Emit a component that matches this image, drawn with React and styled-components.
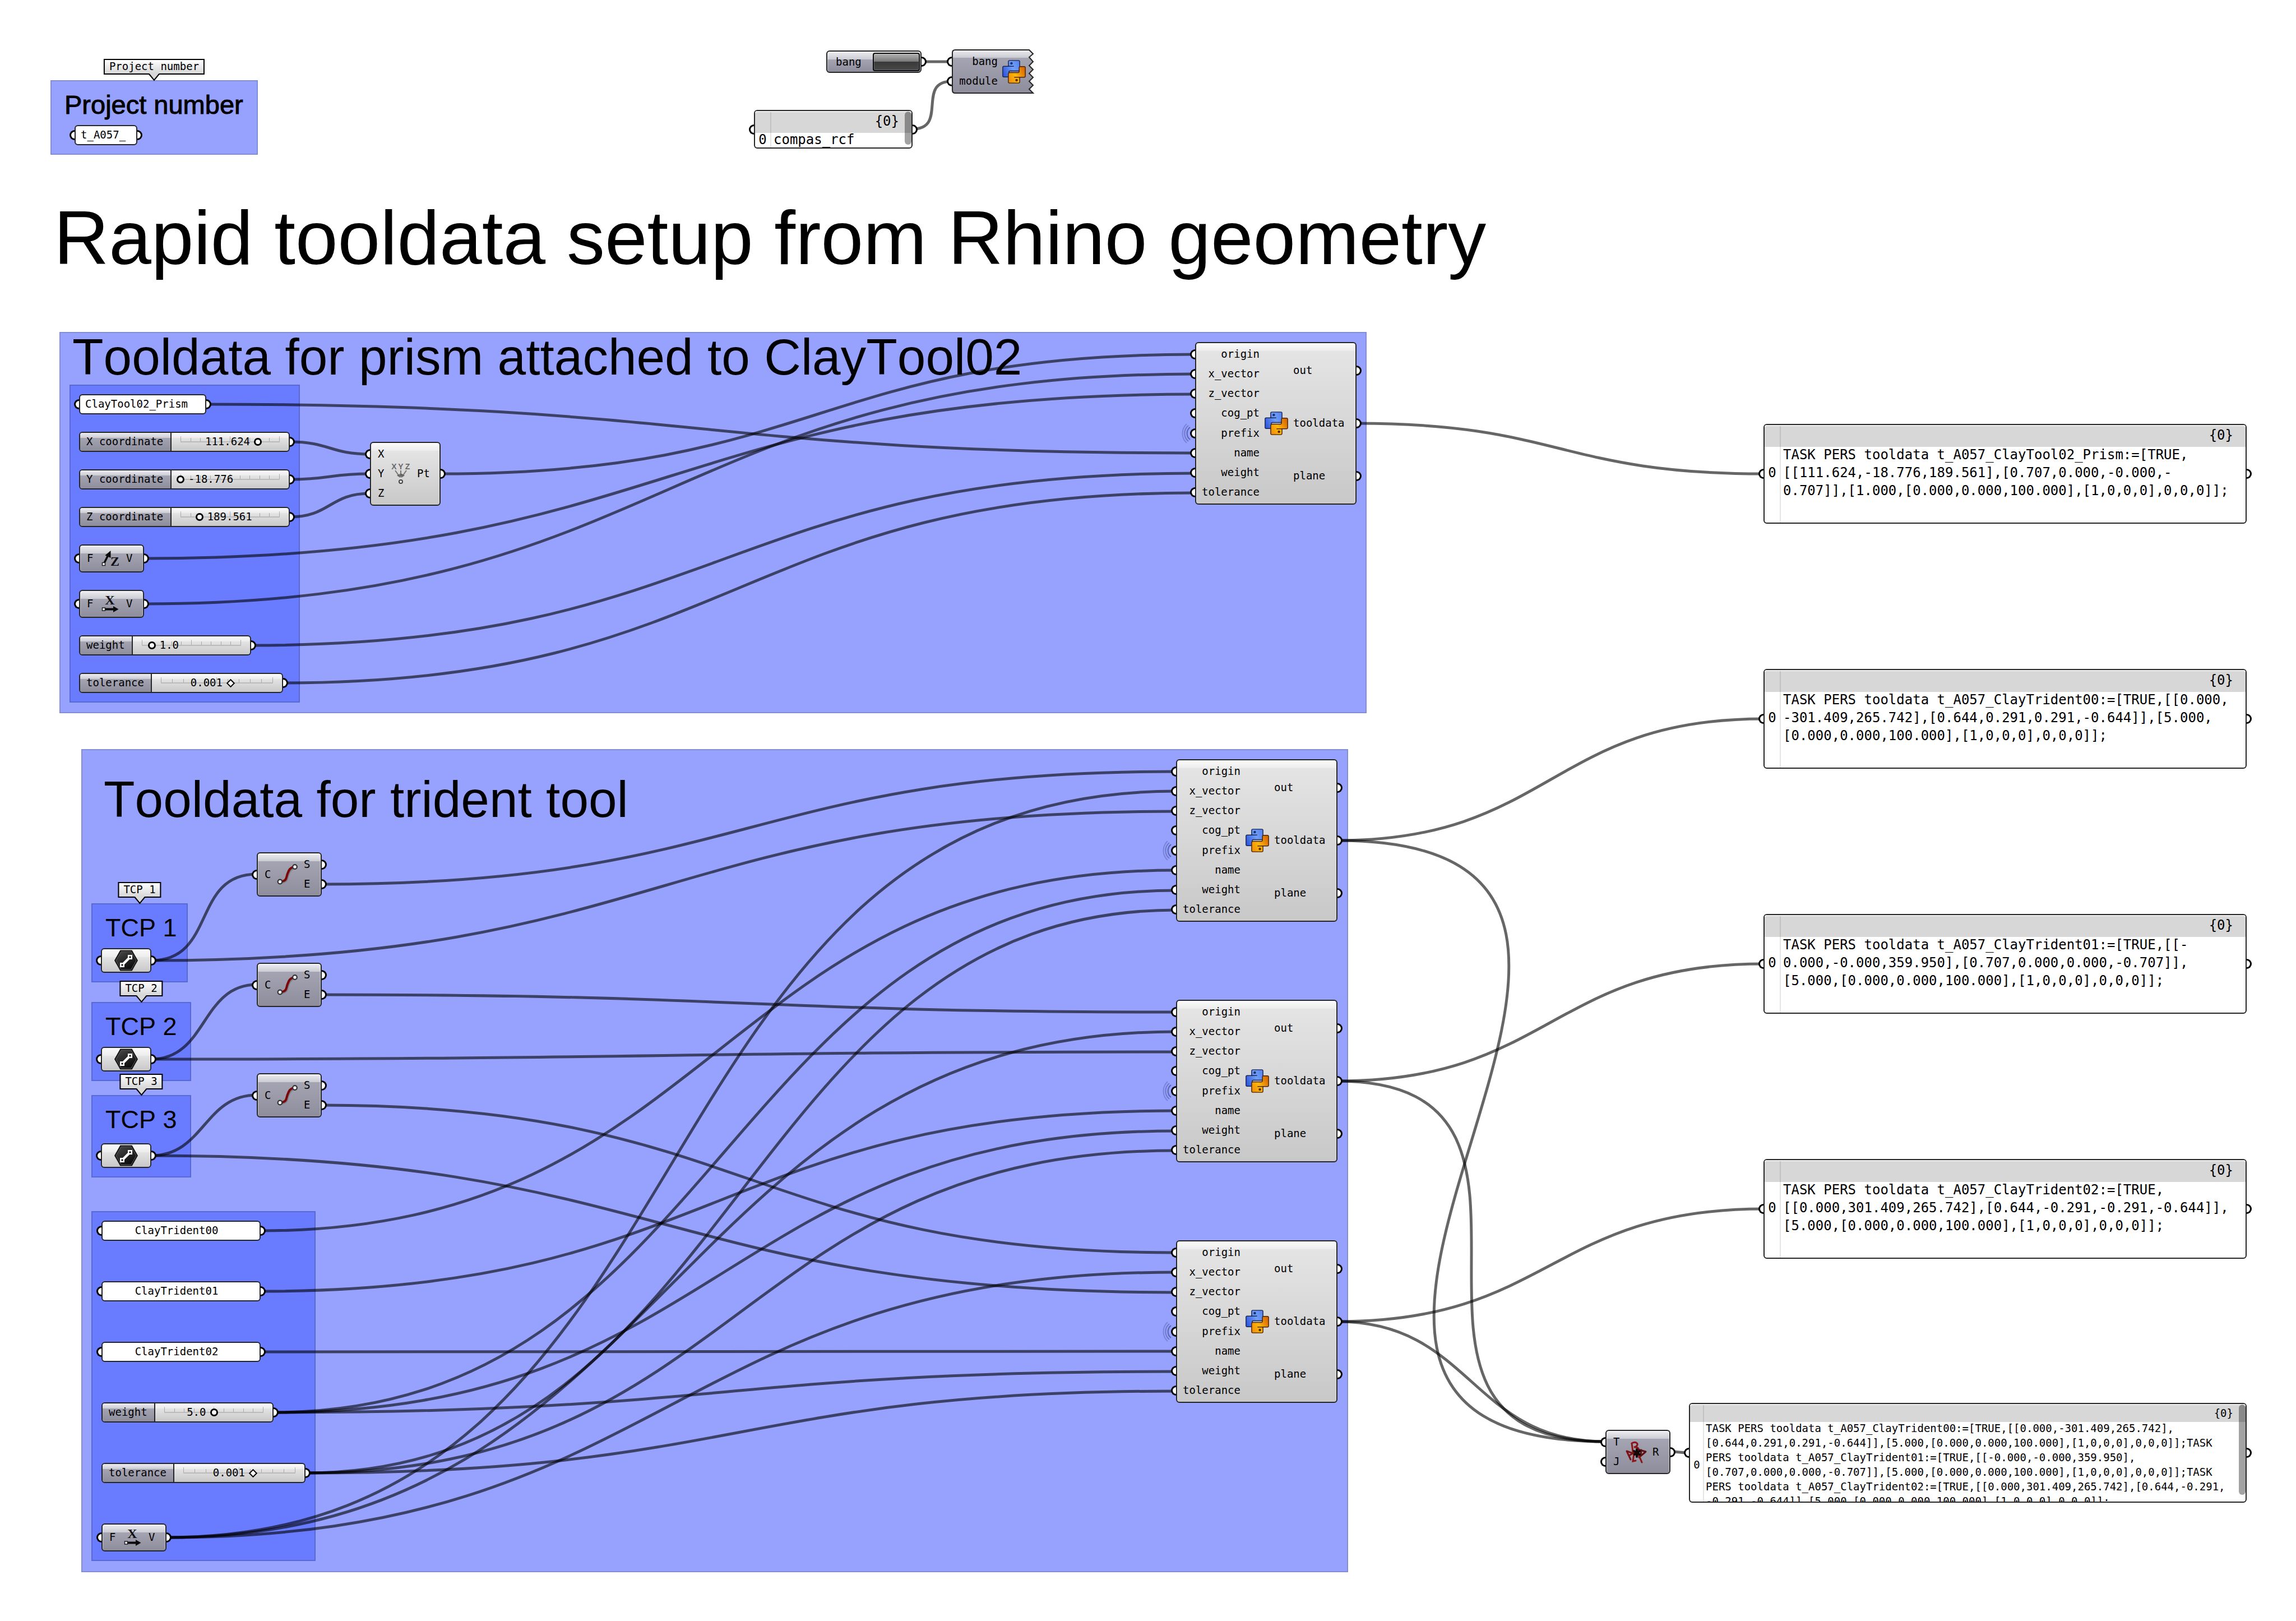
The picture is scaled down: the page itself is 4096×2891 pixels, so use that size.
import React from "react";
import styled, { createGlobalStyle, css } from "styled-components";

const MONO = '"DejaVu Sans Mono", "Liberation Mono", monospace';
const SANS = '"Liberation Sans", Arial, sans-serif';

const GlobalStyle = createGlobalStyle`
  *, *::before, *::after { box-sizing: border-box; }
  body { margin: 0; background: #fff; color: #000; font-family: ${MONO}; font-size: 19px; }
  h1, h2, h3, ul, pre { margin: 0; padding: 0; }
  ul { list-style: none; }
`;

/* ---------- canvas ---------- */

const Canvas = styled.main`
  position: relative;
  width: 100%;
  min-height: 100vh;
  overflow: hidden;
`;

/* A spot on the free canvas; what it holds is stacked in a column. */
const Place = styled.div`
  position: absolute;
  left: ${(p) => p.$x}px;
  top: ${(p) => p.$y}px;
  display: flex;
  flex-direction: column;
  gap: ${(p) => p.$gap || 0}px;
`;

const Group = styled.div`
  position: relative;
  display: flex;
  flex-direction: column;
  align-items: flex-start;
  gap: ${(p) => p.$gap || 0}px;
  padding: ${(p) => p.$pad || "19px 15px 15px"};
  width: ${(p) => p.$w}px;
  min-height: ${(p) => p.$h || 0}px;
  background: ${(p) => (p.$inner ? "#697cff" : "#97a2ff")};
  border: 2px solid ${(p) => (p.$inner ? "#5969d4" : "#838dd3")};
`;

/* Wires run over the groups and under every node and heading. */
const WireLayer = styled.svg`
  position: absolute;
  z-index: 1;
  inset: 0;
  width: 100%;
  height: 100%;
  fill: none;
  stroke: #000;
  stroke-opacity: 0.6;
  stroke-width: 5px;
  pointer-events: none;
`;

const onTop = css`
  position: relative;
  z-index: 2;
`;

const PageTitle = styled.h1`
  ${onTop}
  font: 400 136px / 1 ${SANS};
  font-kerning: none;
  white-space: nowrap;
`;

const GroupTitle = styled.h2`
  ${onTop}
  padding-left: 5px;
  font: 400 91px / 85px ${SANS};
  font-kerning: none;
  white-space: nowrap;
`;

const SmallTitle = styled.h3`
  ${onTop}
  padding-left: 8px;
  font: 400 ${(p) => (p.$heavy ? 47 : 45)}px / 45px ${SANS};
  font-kerning: none;
  white-space: nowrap;
  -webkit-text-stroke: ${(p) => (p.$heavy ? "1px #000" : "0")};
`;

/* ---------- node parts ---------- */

const darkFace = (band) =>
  `linear-gradient(#ececf1 0, #cbcbd3 ${band}px, #a5a4b3 ${band}px, #8e8d9b 100%)`;
const lightFace = (band) =>
  `linear-gradient(#fbfbfb 0, #ececec ${band}px, #e4e4e4 ${band}px, #c8c8c8 100%)`;

const Grip = styled.span`
  position: absolute;
  top: calc(50% - 9px);
  ${(p) => (p.$side === "left" ? "left" : "right")}: ${(p) => (p.$flush ? -9 : -11)}px;
  width: 9px;
  height: 18px;
  background: #fff;
  border: 3px solid #000;
  ${(p) =>
    p.$side === "left"
      ? "border-right: 0; border-radius: 9px 0 0 9px;"
      : "border-left: 0; border-radius: 0 9px 9px 0;"}
`;

const Body = styled.section`
  ${onTop}
  display: flex;
  width: ${(p) => p.$w}px;
  height: ${(p) => p.$h}px;
  border: 2px solid #262626;
  border-radius: 6px;
  background: ${(p) => (p.$dark ? darkFace(14) : lightFace(14))};
  box-shadow: inset 0 1px 0 1px rgba(255, 255, 255, 0.45);
`;

const TornBody = styled(Body)`
  border-color: transparent;
  background: none;
  box-shadow: none;
`;

const TornFace = styled.svg`
  position: absolute;
  z-index: -1;
  left: -2px;
  top: -2px;
  overflow: visible;
`;

const Ports = styled.ul`
  position: relative;
  display: flex;
  flex-direction: column;
  padding: 2px 0;
  width: ${(p) => (p.$w ? `${p.$w}px` : "auto")};
  flex: ${(p) => (p.$w ? "none" : "1")};
`;

const Port = styled.li`
  position: relative;
  flex: 1;
  display: flex;
  align-items: center;
  justify-content: ${(p) => (p.$end ? "flex-end" : "flex-start")};
  padding-left: ${(p) => p.$pad || 0}px;
  padding-bottom: 2px;
  line-height: 24px;
  white-space: nowrap;
`;

const IconSlot = styled.div`
  display: flex;
  align-items: center;
  margin-left: ${(p) => p.$gap || 0}px;
`;

const Waves = styled.svg`
  position: absolute;
  left: -28px;
  top: calc(50% - 26px);
  fill: none;
  stroke: #10184a;
  stroke-width: 2px;
`;

/* ---------- icons ---------- */

function PythonIcon({ id }) {
  const half =
    "M36 37V8q0-7 7-7h56q7 0 7 7v50q0 8-8 8H47q-8 0-8 8v22q0 7-7 7H8q-7 0-7-7V44q0-7 7-7z";
  return (
    <svg width="42" height="42" viewBox="-2 -2 146 146" aria-hidden="true">
      <defs>
        <linearGradient id={`${id}b`} x1="0" y1="0.7" x2="1" y2="0.3">
          <stop offset="0" stopColor="#3159dc" />
          <stop offset="0.6" stopColor="#6f9ff8" />
          <stop offset="1" stopColor="#5b86ee" />
        </linearGradient>
        <linearGradient id={`${id}o`} x1="0" y1="0.7" x2="1" y2="0.2">
          <stop offset="0" stopColor="#d96a06" />
          <stop offset="0.55" stopColor="#fdb80b" />
          <stop offset="1" stopColor="#ef8f0c" />
        </linearGradient>
      </defs>
      <path d={half} fill={`url(#${id}b)`} stroke="#182450" strokeWidth="5" />
      <path d="M34 37h36" stroke="#182450" strokeWidth="5" />
      <circle cx="55" cy="19" r="8" fill="#1a3170" />
      <g transform="rotate(180 71 71)">
        <path d={half} fill={`url(#${id}o)`} stroke="#4a2208" strokeWidth="5" />
        <path d="M34 37h36" stroke="#4a2208" strokeWidth="5" />
        <circle cx="55" cy="19" r="8" fill="#5c2c06" />
      </g>
    </svg>
  );
}

function CurveIcon() {
  return (
    <svg width="42" height="42" viewBox="0 0 42 42" fill="none" aria-hidden="true">
      <path d="M9 35C22 34 20 26 22 21.500S26 9.500 35 9" stroke="#55556a" strokeOpacity="0.4" strokeWidth="4" />
      <path d="M7.500 33.500C20 32.500 18.500 26 20.500 20.500S24 8 34 7" stroke="#7c0606" strokeWidth="4" />
      <circle cx="7.500" cy="33.500" r="3.800" fill="#fff" stroke="#333" strokeWidth="2.200" />
      <circle cx="34" cy="7" r="3.800" fill="#fff" stroke="#333" strokeWidth="2.200" />
    </svg>
  );
}

const Letter = styled.text`
  font-family: ${(p) => (p.$serif ? '"Liberation Serif", serif' : SANS)};
  font-weight: 700;
  font-size: ${(p) => (p.$serif ? 24 : 14)}px;
  fill: ${(p) => (p.$serif ? "#101014" : "#6a6a6a")};
  text-anchor: middle;
`;

function UnitZIcon() {
  return (
    <svg width="42" height="42" viewBox="0 0 42 42" aria-hidden="true">
      <path d="M10 31L18 15" stroke="#0a0a0a" strokeWidth="3.500" />
      <path d="M22.500 7L12.500 15.500L22.500 20z" fill="#0a0a0a" />
      <rect x="7.500" y="28.500" width="5" height="5" fill="#fff" stroke="#222" strokeWidth="1.500" />
      <Letter $serif x="30" y="34">Z</Letter>
    </svg>
  );
}

function UnitXIcon() {
  return (
    <svg width="42" height="42" viewBox="0 0 42 42" aria-hidden="true">
      <Letter $serif x="21" y="22">X</Letter>
      <path d="M12 30.500H28" stroke="#0a0a0a" strokeWidth="4" />
      <path d="M27 25L36.500 30.500L27 36z" fill="#0a0a0a" />
      <rect x="7.500" y="28" width="5" height="5" fill="#fff" stroke="#222" strokeWidth="1.500" />
    </svg>
  );
}

function XyzIcon() {
  return (
    <svg width="42" height="42" viewBox="0 0 42 42" fill="none" aria-hidden="true">
      <Letter x="9" y="13">X</Letter>
      <Letter x="21" y="13">Y</Letter>
      <Letter x="33" y="13">Z</Letter>
      <path d="M11 15L18 25M21 15V25M31 15L24 25" stroke="#777" strokeWidth="2" />
      <path d="M14 24l6 4-1-7zM18 21h6l-3 7zM28 24l-6 4 1-7z" fill="#666" />
      <circle cx="21" cy="35" r="3" fill="#fff" stroke="#444" strokeWidth="2" />
    </svg>
  );
}

function HexIcon({ id }) {
  return (
    <svg width="42" height="38" viewBox="0 0 42 38" aria-hidden="true">
      <defs>
        <linearGradient id={id} x1="0" y1="0" x2="0.6" y2="1">
          <stop offset="0" stopColor="#4a4a4a" />
          <stop offset="1" stopColor="#0c0c0c" />
        </linearGradient>
      </defs>
      <path d="M0 19L10.500 0.500H31.500L42 19L31.500 37.500H10.500z" fill="#151515" />
      <path d="M3 19L12 3H30L39 19L30 35H12z" fill={`url(#${id})`} stroke="#5a5a5a" strokeWidth="1" />
      <path d="M14 27L28 13" stroke="#fff" strokeWidth="4.500" />
      <rect x="10" y="23" width="8" height="8" fill="#fff" />
      <rect x="24" y="9" width="8" height="8" fill="#fff" />
      <rect x="12.500" y="25.500" width="3" height="3" fill="#111" />
      <rect x="26.500" y="11.500" width="3" height="3" fill="#111" />
    </svg>
  );
}

function ScriptIcon() {
  return (
    <svg width="42" height="42" viewBox="0 0 42 42" fill="none" strokeLinecap="round" aria-hidden="true">
      <path d="M15 20L13 5Q20 1 23 6Q24 10 17 12Q25 11 26 18" stroke="#8c1414" strokeWidth="3" />
      <path d="M4 19L11 34M4 19L18 24M8 27L17 22" stroke="#7a1216" strokeWidth="3" />
      <path d="M38 20L24 16M37 21L26 30M30 17L29 27" stroke="#5c1014" strokeWidth="3" />
      <path d="M17 24L15 37L20 36M25 26L28 32L31 39" stroke="#8c1414" strokeWidth="3" />
      <path d="M17 19L27 25M27 19L18 25M22 16V29" stroke="#160606" strokeWidth="4" />
    </svg>
  );
}

/* ---------- component nodes ---------- */

const PY_IN = ["origin", "x_vector", "z_vector", "cog_pt", "prefix", "name", "weight", "tolerance"];
const PY_OUT = ["out", "tooldata", "plane"];

function PythonNode({ id }) {
  return (
    <Body $w={288} $h={290}>
      <Ports $w={113}>
        {PY_IN.map((name) => (
          <Port key={name} $end>
            {name === "prefix" && (
              <Waves width="26" height="52" viewBox="0 0 26 52" aria-hidden="true">
                <path d="M17 15A14 14 0 0 0 17 37" strokeOpacity="0.45" />
                <path d="M14 12A18 18 0 0 0 14 40" strokeOpacity="0.3" />
                <path d="M11 9A23 23 0 0 0 11 43" strokeOpacity="0.22" />
              </Waves>
            )}
            <Grip $side="left" />
            {name}
          </Port>
        ))}
      </Ports>
      <IconSlot $gap={9}>
        <PythonIcon id={id} />
      </IconSlot>
      <Ports>
        {PY_OUT.map((name) => (
          <Port key={name} $pad={9}>
            {name}
            <Grip $side="right" />
          </Port>
        ))}
      </Ports>
    </Body>
  );
}

function SmallNode({ w = 116, h = 79, light, inputs, outputs, children }) {
  return (
    <Body $w={w} $h={h} $dark={!light}>
      <Ports $w={32}>
        {inputs.map((name) => (
          <Port key={name} $pad={12}>
            <Grip $side="left" />
            {name}
          </Port>
        ))}
      </Ports>
      <IconSlot>{children}</IconSlot>
      <Ports>
        {outputs.map((name) => (
          <Port key={name} $pad={8}>
            {name}
            <Grip $side="right" />
          </Port>
        ))}
      </Ports>
    </Body>
  );
}

const CenteredBody = styled(Body)`
  align-items: center;
  justify-content: center;
`;

function ParamNode({ id }) {
  return (
    <CenteredBody $w={90} $h={44}>
      <Grip $side="left" />
      <HexIcon id={id} />
      <Grip $side="right" />
    </CenteredBody>
  );
}

const TORN =
  "M138 1L145 8L138 14L145 22L138 29L145 36L138 43L145 50L138 57L145 64L138 71L145 78H6Q1 78 1 73V6Q1 1 6 1z";

function TornPythonNode() {
  return (
    <TornBody $w={146} $h={79}>
      <TornFace width="146" height="79" viewBox="0 0 146 79" aria-hidden="true">
        <defs>
          <linearGradient id="torn" x1="0" y1="0" x2="0" y2="1">
            <stop offset="0" stopColor="#ececf1" />
            <stop offset="0.18" stopColor="#cbcbd3" />
            <stop offset="0.18" stopColor="#a5a4b3" />
            <stop offset="1" stopColor="#8e8d9b" />
          </linearGradient>
        </defs>
        <path d={TORN} fill="url(#torn)" stroke="#262626" strokeWidth="2" />
      </TornFace>
      <Ports $w={80}>
        {["bang", "module"].map((name) => (
          <Port key={name} $end>
            <Grip $side="left" />
            {name}
          </Port>
        ))}
      </Ports>
      <IconSlot $gap={8}>
        <PythonIcon id="pyt" />
      </IconSlot>
    </TornBody>
  );
}

const BangBody = styled(Body)`
  align-items: center;
  justify-content: space-between;
  padding: 0 1px 0 15px;
  line-height: 24px;
`;

const BangButton = styled.button`
  width: 84px;
  height: 33px;
  padding: 0;
  border: 2px solid #0c0c0c;
  border-radius: 4px;
  background: linear-gradient(#b4b4b4 0, #747474 50%, #393939 50%, #484848 100%);
  box-shadow: inset 0 0 0 1px rgba(255, 255, 255, 0.2);
`;

/* ---------- text capsule ---------- */

const Capsule = styled.label`
  ${onTop}
  display: block;
  width: ${(p) => p.$w}px;
  height: 36px;
  margin-left: ${(p) => p.$indent || 0}px;
`;

const CapsuleInput = styled.textarea`
  display: block;
  width: 100%;
  height: 100%;
  margin: 0;
  padding: 1px ${(p) => (p.$center ? 16 : 0)}px 0 ${(p) => (p.$center ? 0 : 9)}px;
  border: 2px solid #262626;
  border-radius: 6px;
  background: #fff;
  color: #000;
  font: 19px / 28px ${MONO};
  text-align: ${(p) => (p.$center ? "center" : "left")};
  white-space: pre;
  resize: none;
  overflow: hidden;
`;

function TextCapsule({ w, value, center, indent }) {
  return (
    <Capsule $w={w} $indent={indent}>
      <Grip $side="left" $flush />
      <CapsuleInput rows={1} aria-label={value} defaultValue={value} $center={center} />
      <Grip $side="right" $flush />
    </Capsule>
  );
}

/* ---------- slider ---------- */

const SliderBody = styled(Body)`
  height: 36px;
  background: ${lightFace(9)};
`;

const SliderLabel = styled.label`
  width: ${(p) => p.$w}px;
  padding-left: 11px;
  border-right: 2px solid #262626;
  border-radius: 4px 0 0 4px;
  background: ${darkFace(9)};
  line-height: 30px;
  white-space: nowrap;
`;

const Track = styled.div`
  position: relative;
  flex: 1;
  margin: 0 16px;
`;

const Rail = styled.div`
  display: flex;
  justify-content: space-between;
  align-items: flex-end;
  height: 17px;
  border-bottom: 2px solid rgba(0, 0, 0, 0.15);
`;

const Tick = styled.span`
  width: 1px;
  height: ${(p) => (p.$major ? 9 : 6)}px;
  background: rgba(0, 0, 0, 0.25);
`;

const thumb = css`
  appearance: none;
  width: 14px;
  height: 14px;
  border: 3px solid #000;
  border-radius: 50%;
  background: #fff;
`;

const diamondThumb = css`
  width: 11px;
  height: 11px;
  border-width: 2px;
  border-radius: 0;
  transform: rotate(45deg);
`;

const Range = styled.input`
  position: absolute;
  left: -7px;
  top: 8px;
  width: calc(100% + 14px);
  height: 16px;
  margin: 0;
  appearance: none;
  background: none;
  &::-webkit-slider-thumb { ${thumb} ${(p) => p.$diamond && diamondThumb} }
  &::-moz-range-thumb { ${thumb} ${(p) => p.$diamond && diamondThumb} }
`;

const Value = styled.output`
  position: absolute;
  top: 3px;
  line-height: 24px;
`;

function Slider({ id, w, label, labelW, value, pos, before, diamond }) {
  return (
    <SliderBody $w={w}>
      <SliderLabel htmlFor={id} $w={labelW}>{label}</SliderLabel>
      <Track>
        <Rail>
          {Array.from({ length: 11 }, (_, i) => (
            <Tick key={i} $major={i % 5 === 0} />
          ))}
        </Rail>
        <Value
          htmlFor={id}
          style={before ? { right: `calc(${100 - pos}% + 14px)` } : { left: `calc(${pos}% + 14px)` }}
        >
          {value}
        </Value>
        <Range id={id} type="range" min="0" max="100" step="any" defaultValue={pos} $diamond={diamond} />
      </Track>
      <Grip $side="right" />
    </SliderBody>
  );
}

/* ---------- panel ---------- */

const PanelBody = styled(Body)`
  flex-direction: column;
  background: #fff;
  font-size: ${(p) => (p.$small ? 19 : 24)}px;
`;

const PanelHead = styled.header`
  height: ${(p) => (p.$small ? 32 : 39)}px;
  flex: none;
  padding-right: 22px;
  border-radius: 4px 4px 0 0;
  background: #d7d7d7;
  box-shadow: inset 0 2px 0 #f0f0f0;
  line-height: ${(p) => (p.$small ? 32 : 37)}px;
  text-align: right;
`;

const PanelMain = styled.div`
  flex: 1;
  min-height: 0;
  margin-top: -2px;
  overflow: hidden;
`;

const PanelRow = styled.div`
  display: flex;
  align-items: center;
  line-height: ${(p) => p.$line}px;
`;

const Index = styled.span`
  width: ${(p) => (p.$small ? 24 : 27)}px;
  text-align: center;
`;

const PanelText = styled.pre`
  padding-left: ${(p) => (p.$small ? 4 : 6)}px;
  font: inherit;
  font-family: ${MONO};
`;

const Divider = styled.span`
  position: absolute;
  left: ${(p) => (p.$small ? 23 : 27)}px;
  top: 2px;
  bottom: 0;
  width: 2px;
  background: rgba(0, 0, 0, 0.1);
`;

const ScrollThumb = styled.span`
  position: absolute;
  right: 0;
  top: 1px;
  bottom: ${(p) => p.$bottom}px;
  width: 12px;
  border-radius: 6px;
  background: rgba(0, 0, 0, 0.36);
`;

function Panel({ w = 862, h = 178, line = 32, lines, small, thumbBottom }) {
  return (
    <PanelBody $w={w} $h={h} $small={small}>
      <PanelHead $small={small}>{"{0}"}</PanelHead>
      <PanelMain>
        <PanelRow $line={line}>
          <Index $small={small}>0</Index>
          <PanelText $small={small}>{lines.join("\n")}</PanelText>
        </PanelRow>
      </PanelMain>
      <Divider $small={small} />
      {thumbBottom && <ScrollThumb $bottom={thumbBottom} />}
      <Grip $side="left" />
      <Grip $side="right" />
    </PanelBody>
  );
}

/* ---------- tags ---------- */

/* Balloon that hangs over the middle of a group's top edge. */
const TagBox = styled.div`
  position: absolute;
  z-index: 3;
  bottom: calc(100% + 12px);
  left: 50%;
  transform: translateX(-50%);
  height: 28px;
  padding: 0 8px;
  border: 2px solid #000;
  background: linear-gradient(#fff, #d6d6d6);
  line-height: 23px;
  white-space: pre;
`;

const TagTip = styled.svg`
  position: absolute;
  left: calc(50% - 10px);
  top: 24px;
`;

function Tag({ children }) {
  return (
    <TagBox>
      {children}
      <TagTip width="20" height="14" viewBox="0 0 20 14" aria-hidden="true">
        <path d="M1 0L10 12L19 0z" fill="#d8d8d8" />
        <path d="M1 1L10 12L19 1" fill="none" stroke="#000" strokeWidth="2" />
      </TagTip>
    </TagBox>
  );
}

/* ---------- data ---------- */

const PY = [
  { x: 2132, y: 610 },
  { x: 2098, y: 1354 },
  { x: 2098, y: 1783 },
  { x: 2098, y: 2212 },
];
const PANEL_Y = [756, 1193, 1630, 2067];
const CURVE_Y = [1520, 1717, 1914];

const TCPS = [
  { name: "TCP 1", y: 1611, w: 172, gap: 14, nodeY: 1691 },
  { name: "TCP 2", y: 1787, w: 178, gap: 14, nodeY: 1867 },
  { name: "TCP 3", y: 1953, w: 178, gap: 20, nodeY: 2039 },
];

const PANELS = [
  [
    "TASK PERS tooldata t_A057_ClayTool02_Prism:=[TRUE,",
    "[[111.624,-18.776,189.561],[0.707,0.000,-0.000,-",
    "0.707]],[1.000,[0.000,0.000,100.000],[1,0,0,0],0,0,0]];",
  ],
  [
    "TASK PERS tooldata t_A057_ClayTrident00:=[TRUE,[[0.000,",
    "-301.409,265.742],[0.644,0.291,0.291,-0.644]],[5.000,",
    "[0.000,0.000,100.000],[1,0,0,0],0,0,0]];",
  ],
  [
    "TASK PERS tooldata t_A057_ClayTrident01:=[TRUE,[[-",
    "0.000,-0.000,359.950],[0.707,0.000,0.000,-0.707]],",
    "[5.000,[0.000,0.000,100.000],[1,0,0,0],0,0,0]];",
  ],
  [
    "TASK PERS tooldata t_A057_ClayTrident02:=[TRUE,",
    "[[0.000,301.409,265.742],[0.644,-0.291,-0.291,-0.644]],",
    "[5.000,[0.000,0.000,100.000],[1,0,0,0],0,0,0]];",
  ],
];

const JOINED = [
  "TASK PERS tooldata t_A057_ClayTrident00:=[TRUE,[[0.000,-301.409,265.742],",
  "[0.644,0.291,0.291,-0.644]],[5.000,[0.000,0.000,100.000],[1,0,0,0],0,0,0]];TASK",
  "PERS tooldata t_A057_ClayTrident01:=[TRUE,[[-0.000,-0.000,359.950],",
  "[0.707,0.000,0.000,-0.707]],[5.000,[0.000,0.000,100.000],[1,0,0,0],0,0,0]];TASK",
  "PERS tooldata t_A057_ClayTrident02:=[TRUE,[[0.000,301.409,265.742],[0.644,-0.291,",
  "-0.291,-0.644]],[5.000,[0.000,0.000,100.000],[1,0,0,0],0,0,0]];",
];

/* ---------- wiring ---------- */

const pyIn = (n, i) => [PY[n].x, Math.round(PY[n].y + 22 + i * 35.25)];
const pyOut = (n) => [PY[n].x + 288, PY[n].y + 145];

const WIRES = [
  [[1644, 110], [1698, 110]],
  [[1628, 230], [1698, 145]],
  [[517, 788], [660, 810]],
  [[517, 855], [660, 845]],
  [[517, 922], [660, 880]],
  [[786, 845], pyIn(0, 0)],
  [[257, 1077], pyIn(0, 1)],
  [[257, 996], pyIn(0, 2)],
  [[368, 721], pyIn(0, 5)],
  [[448, 1151], pyIn(0, 6)],
  [[505, 1218], pyIn(0, 7)],
  [pyOut(0), [3146, 845]],
  ...[1, 2, 3].flatMap((n) => {
    const c = CURVE_Y[n - 1];
    const tcp = [270, TCPS[n - 1].nodeY + 22];
    return [
      [tcp, [458, c + 39]],
      [tcp, pyIn(n, 2)],
      [[574, c + 57], pyIn(n, 0)],
      [[465, 2087 + 108 * n], pyIn(n, 5)],
      [[488, 2519], pyIn(n, 6)],
      [[545, 2627], pyIn(n, 7)],
      [[297, 2742], pyIn(n, 1)],
      [pyOut(n), [3146, PANEL_Y[n] + 89]],
      [pyOut(n), [2864, 2571]],
    ];
  }),
  [[2980, 2589], [3013, 2591]],
];

/* Handles reach half the run, or further when the wire is steep. */
function wirePath([[x1, y1], [x2, y2]]) {
  const reach = Math.round(Math.max((x2 - x1) / 2, Math.abs(y2 - y1) * 0.75));
  return `M${x1} ${y1}C${x1 + reach} ${y1} ${x2 - reach} ${y2} ${x2} ${y2}`;
}

/* ---------- page ---------- */

export default function App() {
  return (
    <>
      <GlobalStyle />
      <Canvas>
        <Place $x={90} $y={143}>
          <Group $w={370} $gap={14}>
            <Tag>Project number</Tag>
            <SmallTitle $heavy>Project number</SmallTitle>
            <TextCapsule w={112} indent={26} value="t_A057_" />
          </Group>
        </Place>

        <Place $x={1474} $y={90}>
          <BangBody $w={170} $h={40} $dark>
            bang
            <BangButton type="button" aria-label="bang" />
            <Grip $side="right" />
          </BangBody>
        </Place>
        <Place $x={1698} $y={88}>
          <TornPythonNode />
        </Place>
        <Place $x={1345} $y={196}>
          <Panel w={283} h={69} line={28} lines={["compas_rcf"]} thumbBottom={5} />
        </Place>

        <Place $x={96} $y={356}>
          <PageTitle>Rapid tooldata setup from Rhino geometry</PageTitle>
        </Place>

        <Place $x={106} $y={592}>
          <Group $w={2332} $h={680} $pad="0 16px 16px" $gap={7}>
            <GroupTitle>Tooldata for prism attached to ClayTool02</GroupTitle>
            <Group $inner $w={411} $pad="15px" $gap={31}>
              <TextCapsule w={227} value="ClayTool02_Prism" />
              <Slider id="px" w={376} label="X coordinate" labelW={163} value="111.624" pos={78} before />
              <Slider id="py" w={376} label="Y coordinate" labelW={163} value="-18.776" pos={0} />
              <Slider id="pz" w={376} label="Z coordinate" labelW={163} value="189.561" pos={19} />
              <SmallNode h={50} inputs={["F"]} outputs={["V"]}>
                <UnitZIcon />
              </SmallNode>
              <SmallNode h={50} inputs={["F"]} outputs={["V"]}>
                <UnitXIcon />
              </SmallNode>
              <Slider id="pw" w={307} label="weight" labelW={94} value="1.0" pos={10} />
              <Slider id="pt" w={364} label="tolerance" labelW={128} value="0.001" pos={62} before diamond />
            </Group>
          </Group>
        </Place>
        <Place $x={660} $y={788}>
          <SmallNode w={126} h={114} light inputs={["X", "Y", "Z"]} outputs={["Pt"]}>
            <XyzIcon />
          </SmallNode>
        </Place>
        <Place $x={PY[0].x} $y={PY[0].y}>
          <PythonNode id="p0" />
        </Place>

        <Place $x={145} $y={1336}>
          <Group $w={2260} $h={1468} $pad="45px 33px">
            <GroupTitle>Tooldata for trident tool</GroupTitle>
          </Group>
        </Place>
        {TCPS.map((tcp) => (
          <Place key={tcp.name} $x={163} $y={tcp.y}>
            <Group $inner $w={tcp.w} $gap={tcp.gap}>
              <Tag>{tcp.name}</Tag>
              <SmallTitle>{tcp.name}</SmallTitle>
              <ParamNode id={`hex${tcp.y}`} />
            </Group>
          </Place>
        ))}
        <Place $x={163} $y={2160}>
          <Group $inner $w={400} $pad="15px 16px" $gap={72}>
            <TextCapsule w={284} value="ClayTrident00" center />
            <TextCapsule w={284} value="ClayTrident01" center />
            <TextCapsule w={284} value="ClayTrident02" center />
            <Slider id="tw" w={307} label="weight" labelW={94} value="5.0" pos={50} before />
            <Slider id="tt" w={364} label="tolerance" labelW={128} value="0.001" pos={62} before diamond />
            <SmallNode h={50} inputs={["F"]} outputs={["V"]}>
              <UnitXIcon />
            </SmallNode>
          </Group>
        </Place>
        <Place $x={458} $y={CURVE_Y[0]} $gap={118}>
          {CURVE_Y.map((y) => (
            <SmallNode key={y} inputs={["C"]} outputs={["S", "E"]}>
              <CurveIcon />
            </SmallNode>
          ))}
        </Place>
        <Place $x={PY[1].x} $y={PY[1].y} $gap={139}>
          <PythonNode id="p1" />
          <PythonNode id="p2" />
          <PythonNode id="p3" />
        </Place>

        <Place $x={3146} $y={PANEL_Y[0]} $gap={259}>
          {PANELS.map((lines) => (
            <Panel key={lines[0]} lines={lines} />
          ))}
        </Place>
        <Place $x={2864} $y={2550}>
          <SmallNode inputs={["T", "J"]} outputs={["R"]}>
            <ScriptIcon />
          </SmallNode>
        </Place>
        <Place $x={3013} $y={2502}>
          <Panel small w={995} h={178} line={26} thumbBottom={12} lines={JOINED} />
        </Place>

        <WireLayer aria-hidden="true">
          {WIRES.map((wire, i) => (
            <path key={i} d={wirePath(wire)} />
          ))}
        </WireLayer>
      </Canvas>
    </>
  );
}
